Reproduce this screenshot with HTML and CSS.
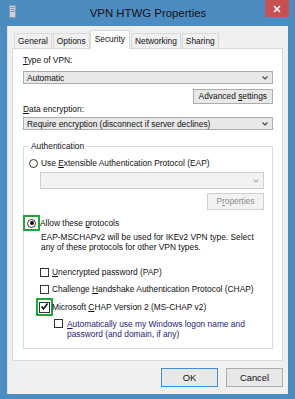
FILE: index.html
```html
<!DOCTYPE html>
<html lang="en">
<head>
    <meta charset="UTF-8">
    <title>VPN HTWG Properties</title>
    <link rel="stylesheet" href="styles.css">
</head>
<body>

<div class="window">
    <!-- Title bar -->
    <div class="titlebar">
        <svg class="app-icon" width="7" height="13" viewBox="0 0 7 13">
            <rect x="0.5" y="0.5" width="6" height="12" fill="#c9d3de" stroke="#8a99aa"/>
            <rect x="1.5" y="2" width="4" height="1" fill="#7d8fa3"/>
            <rect x="1.5" y="4" width="4" height="1" fill="#7d8fa3"/>
            <rect x="1.5" y="6" width="4" height="1" fill="#7d8fa3"/>
        </svg>
        <span class="title">VPN HTWG Properties</span>
        <div class="close-btn">
            <svg width="8" height="8" viewBox="0 0 8 8">
                <path d="M1 1 L7 7 M7 1 L1 7" stroke="#fff" stroke-width="1.6"/>
            </svg>
        </div>
    </div>

    <div class="client">
        <!-- Tabs -->
        <div class="tabs">
            <div class="tab">General</div>
            <div class="tab">Options</div>
            <div class="tab active">Security</div>
            <div class="tab">Networking</div>
            <div class="tab">Sharing</div>
        </div>

        <div class="panel">
            <div class="label"><u>T</u>ype of VPN:</div>
            <div class="combo first">
                <span>Automatic</span>
                <svg class="arrow" width="6" height="4" viewBox="0 0 6 4"><path d="M0.5 0.5 L3 3 L5.5 0.5" fill="none" stroke="#444" stroke-width="1.1"/></svg>
            </div>

            <div class="btn-row">
                <div class="btn">Advanced <u>s</u>ettings</div>
            </div>

            <div class="label"><u>D</u>ata encryption:</div>
            <div class="combo">
                <span>Require encryption (disconnect if server declines)</span>
                <svg class="arrow" width="6" height="4" viewBox="0 0 6 4"><path d="M0.5 0.5 L3 3 L5.5 0.5" fill="none" stroke="#444" stroke-width="1.1"/></svg>
            </div>

            <!-- Authentication group -->
            <div class="group">
                <span class="legend">Authentication</span>

                <div class="option eap">
                    <span class="radio"></span>
                    <span>Use <u>E</u>xtensible Authentication Protocol (EAP)</span>
                </div>
                <div class="combo disabled">
                    <span></span>
                    <svg class="arrow" width="6" height="4" viewBox="0 0 6 4"><path d="M0.5 0.5 L3 3 L5.5 0.5" fill="none" stroke="#b0b0b0" stroke-width="1.1"/></svg>
                </div>
                <div class="btn-row props">
                    <div class="btn disabled">P<u>r</u>operties</div>
                </div>

                <div class="option allow">
                    <span class="mark-box radio-box"><span class="radio checked"></span></span>
                    <span>Allow these <u>p</u>rotocols</span>
                </div>
                <p class="desc">EAP-MSCHAPv2 will be used for IKEv2 VPN type. Select<br>any of these protocols for other VPN types.</p>

                <div class="option check pap">
                    <span class="checkbox"></span>
                    <span><u>U</u>nencrypted password (PAP)</span>
                </div>
                <div class="option check chap">
                    <span class="checkbox"></span>
                    <span>Challenge <u>H</u>andshake Authentication Protocol (CHAP)</span>
                </div>
                <div class="option check mschap">
                    <span class="mark-box"><span class="checkbox checked">
                        <svg width="9" height="9" viewBox="0 0 9 9"><path d="M1.5 4.5 L3.5 7 L7.5 1.5" fill="none" stroke="#111" stroke-width="1.6"/></svg>
                    </span></span>
                    <span>Microsoft <u>C</u>HAP Version 2 (MS-CHAP v2)</span>
                </div>
                <div class="option check auto">
                    <span class="checkbox"></span>
                    <span class="blue"><u>A</u>utomatically use my Windows logon name and<br>password (and domain, if any)</span>
                </div>
            </div>
        </div>

        <!-- Dialog buttons -->
        <div class="footer">
            <div class="btn dialog default">OK</div>
            <div class="btn dialog">Cancel</div>
        </div>
    </div>
</div>

</body>
</html>
```

FILE: styles.css
```css
body {
    margin: 0;
    padding: 0;
    font-family: "Liberation Sans", Arial, sans-serif;
    font-size: 8.4px;
    color: #111;
}
u {
    text-decoration: underline;
    text-underline-offset: 1px;
}
.window {
    width: 295px;
    height: 399px;
    background-color: #4d8cc1;
    display: flex;
    flex-direction: column;
    box-sizing: border-box;
}
.titlebar {
    height: 26px;
    display: flex;
    align-items: center;
    position: relative;
}
.app-icon {
    position: absolute;
    left: 9px;
    top: 5px;
}
.title {
    flex: 1;
    text-align: center;
    font-size: 11.4px;
    color: #111;
    margin-left: 1px;
}
.close-btn {
    position: absolute;
    right: 6px;
    top: 0;
    width: 24px;
    height: 17px;
    background-color: #c75050;
    display: flex;
    align-items: center;
    justify-content: center;
}
.client {
    margin: 0 7px 5px 7px;
    flex: 1;
    background-color: #f0f0f0;
    border-left: 1px solid #d7e3ef;
    padding: 5px 4px 0 4px;
    display: flex;
    flex-direction: column;
}
.tabs {
    display: flex;
    align-items: flex-end;
    padding-left: 2px;
    height: 18px;
    position: relative;
    z-index: 1;
}
.tab {
    height: 15px;
    box-sizing: border-box;
    border: 1px solid #d9d9d9;
    border-bottom: none;
    background-color: #f0f0f0;
    padding: 0 3px;
    margin-right: 1px;
    line-height: 14px;
    margin-bottom: 1px;
}
.tab.active {
    height: 19px;
    margin-bottom: 0;
    background-color: #fff;
    padding: 1px 4px 0 4px;
    margin-left: -1px;
}
.panel {
    height: 313px;
    box-sizing: border-box;
    background-color: #fff;
    border: 1px solid #d9d9d9;
    margin-top: -1px;
    margin-right: 1px;
    padding: 6px 9px 0 10px;
}
.label {
    height: 10px;
    line-height: 10px;
}
.combo {
    height: 13px;
    box-sizing: border-box;
    border: 1px solid #acacac;
    background-color: #e8e8e8;
    display: flex;
    justify-content: space-between;
    align-items: center;
    padding: 0 4px 0 3px;
    margin-top: 3px;
    white-space: nowrap;
}
.combo.first {
    margin-top: 6px;
}
.arrow {
    flex-shrink: 0;
}
.btn-row {
    display: flex;
    justify-content: flex-end;
    margin-top: 5px;
}
.btn {
    height: 15px;
    box-sizing: border-box;
    border: 1px solid #acacac;
    background-color: #e8e8e8;
    padding: 0 5px;
    line-height: 13px;
    text-align: center;
    white-space: nowrap;
}
.btn.disabled {
    width: 57px;
    height: 17px;
    line-height: 15px;
    color: #8a8a8a;
    background-color: #f2f2f2;
    border-color: #cfcfcf;
}
.combo.disabled {
    height: 17px;
    background-color: #f2f2f2;
    border-color: #cfcfcf;
    margin: 3px 0 0 11px;
}
.btn-row.props {
    margin-top: 4px;
}
.group {
    margin-top: 16px;
    height: 203px;
    box-sizing: border-box;
    border: 1px solid #dcdcdc;
    position: relative;
    padding: 10px 8px 0 5px;
}
.legend {
    position: absolute;
    top: -6px;
    left: 5px;
    background-color: #fff;
    padding: 0 2px;
    line-height: 10px;
}
.option {
    display: flex;
    align-items: center;
    height: 12px;
    gap: 3px;
    white-space: nowrap;
}
.radio {
    width: 9px;
    height: 9px;
    box-sizing: border-box;
    border: 1px solid #333;
    border-radius: 50%;
    background-color: #fff;
    flex-shrink: 0;
    position: relative;
}
.radio.checked::after {
    content: "";
    position: absolute;
    left: 1.5px;
    top: 1.5px;
    width: 4px;
    height: 4px;
    border-radius: 50%;
    background-color: #111;
}
.mark-box {
    box-sizing: border-box;
    border: 2px solid #1fa83a;
    display: flex;
    align-items: center;
    justify-content: center;
    flex-shrink: 0;
}
.radio-box {
    width: 17px;
    height: 16px;
    margin-left: -6px;
    margin-right: -3px;
}
.allow {
    margin-top: 7px;
}
.desc {
    margin: 3px 0 0 12px;
    line-height: 10px;
    white-space: nowrap;
}
.check {
    margin-left: 11px;
}
.checkbox {
    width: 9px;
    height: 9px;
    box-sizing: border-box;
    border: 1px solid #333;
    background-color: #fff;
    flex-shrink: 0;
    display: flex;
    align-items: center;
    justify-content: center;
}
.checkbox svg {
    margin-top: -1px;
}
.mschap .mark-box {
    width: 17px;
    height: 18px;
    margin-left: -4px;
    margin-right: -4px;
}
.mschap .checkbox {
    width: 11px;
    height: 11px;
}
.pap {
    margin-top: 14px;
}
.chap {
    margin-top: 5px;
}
.mschap {
    margin-top: 6px;
}
.auto {
    margin-left: 25px;
    margin-top: 6px;
    align-items: flex-start;
    height: auto;
    gap: 4px;
}
.auto .checkbox {
    margin-top: 0;
}
.blue {
    color: #1c1c78;
    line-height: 10px;
}
.footer {
    display: flex;
    justify-content: flex-end;
    gap: 8px;
    margin-top: 7px;
    padding-right: 1px;
}
.btn.dialog {
    width: 57px;
    height: 19px;
    line-height: 17px;
    font-size: 9.4px;
}
.btn.default {
    border-color: #3c8fd9;
}
```
